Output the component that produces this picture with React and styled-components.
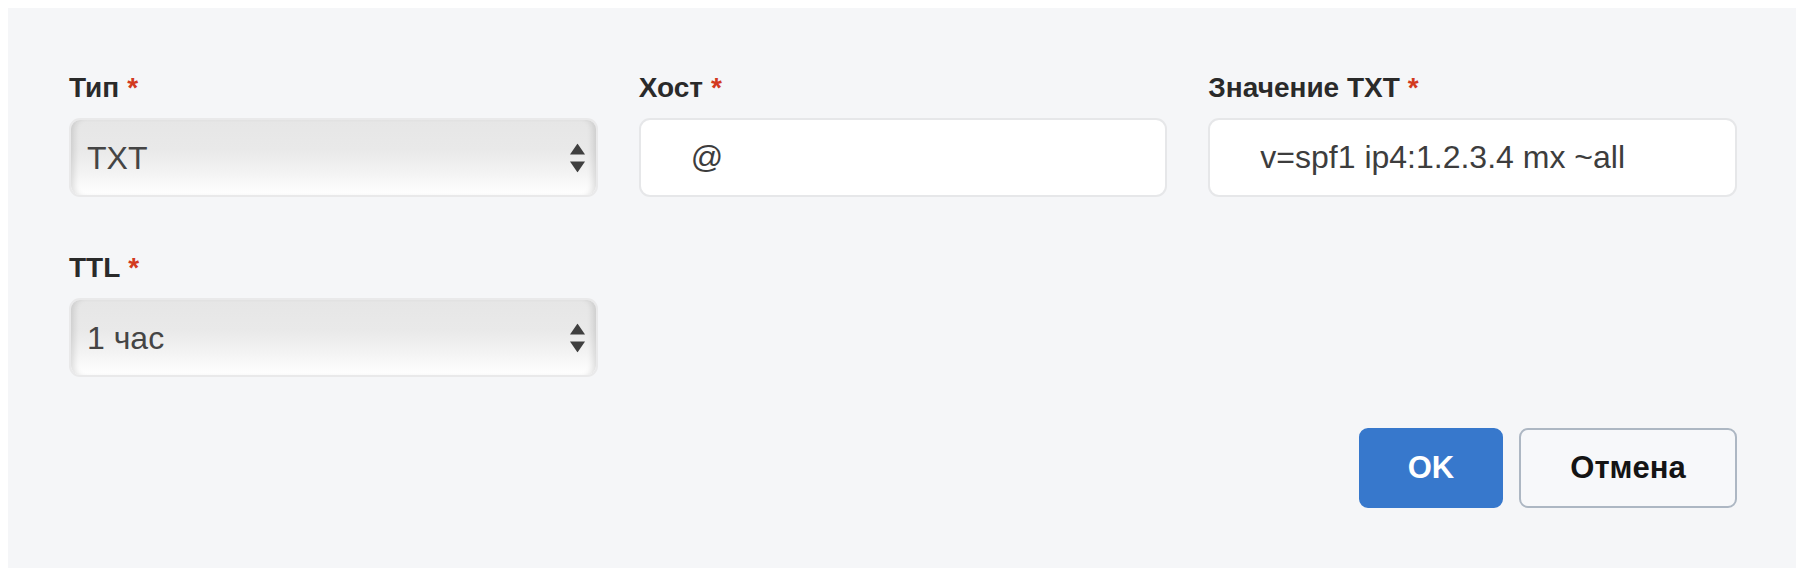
import React from "react";
import styled, { createGlobalStyle } from "styled-components";

const Global = createGlobalStyle`
  html, body { margin: 0; padding: 0; background: #ffffff; }
  body { margin: 8px; font-family: "Liberation Sans", Arial, sans-serif; }
  * { box-sizing: border-box; }
`;

const Panel = styled.form`
  background: #f5f6f8;
  padding: 64px 59px 60px 61px;
  height: 560px;
`;

const Grid = styled.div`
  display: grid;
  grid-template-columns: repeat(3, 1fr);
  column-gap: 41px;
  row-gap: 55px;
`;

const Field = styled.div`
  display: flex;
  flex-direction: column;
  min-width: 0;
`;

const Label = styled.label`
  font-size: 28px;
  line-height: 32px;
  font-weight: 700;
  color: #2a2a2a;
  margin-bottom: 14px;
  white-space: nowrap;
`;

const Required = styled.span`
  color: #d23a1f;
  margin-left: 8px;
`;

const SelectWrap = styled.div`
  position: relative;
  height: 79px;
`;

const NativeSelect = styled.select`
  appearance: none;
  -webkit-appearance: none;
  width: 100%;
  height: 100%;
  border: 2px solid #e9e9ea;
  border-radius: 11px;
  padding: 0 50px 0 16px;
  font-family: "Liberation Sans", Arial, sans-serif;
  font-size: 32px;
  color: #454545;
  background: linear-gradient(to bottom, #e6e6e6 0%, #e9e9e9 40%, #f3f3f3 70%, #ffffff 100%);
  box-shadow: inset 7px 0 6px -4px rgba(0, 0, 0, 0.12), inset -7px 0 6px -4px rgba(0, 0, 0, 0.12);
  outline: none;
`;

const Arrows = styled.svg`
  position: absolute;
  right: 13px;
  top: 50%;
  transform: translateY(-50%);
  pointer-events: none;
`;

const TextInput = styled.input`
  height: 79px;
  width: 100%;
  border: 2px solid #e6e7e9;
  border-radius: 11px;
  background: #ffffff;
  padding: 0 16px 0 50px;
  font-family: "Liberation Sans", Arial, sans-serif;
  font-size: 32px;
  color: #3d3d3d;
  outline: none;
`;

const Actions = styled.div`
  display: flex;
  justify-content: flex-end;
  gap: 16px;
  margin-top: 51px;
`;

const Button = styled.button`
  height: 80px;
  width: ${(p) => (p.$primary ? "144px" : "218px")};
  border-radius: 9px;
  font-family: "Liberation Sans", Arial, sans-serif;
  font-size: 31px;
  font-weight: 700;
  cursor: pointer;
  border: 2px solid ${(p) => (p.$primary ? "#3778cc" : "#adb7c3")};
  background: ${(p) => (p.$primary ? "#3778cc" : "#f7f8fa")};
  color: ${(p) => (p.$primary ? "#ffffff" : "#141414")};
`;

function SelectField({ label, value, options }) {
  return (
    <Field>
      <Label>
        {label}
        <Required>*</Required>
      </Label>
      <SelectWrap>
        <NativeSelect defaultValue={value}>
          {options.map((o) => (
            <option key={o}>{o}</option>
          ))}
        </NativeSelect>
        <Arrows width="15" height="29" viewBox="0 0 15 29">
          <polygon points="7.5,0 15,11 0,11" fill="#3f3f3f" />
          <polygon points="0,18 15,18 7.5,29" fill="#3f3f3f" />
        </Arrows>
      </SelectWrap>
    </Field>
  );
}

function InputField({ label, value }) {
  return (
    <Field>
      <Label>
        {label}
        <Required>*</Required>
      </Label>
      <TextInput defaultValue={value} />
    </Field>
  );
}

export default function App() {
  return (
    <>
      <Global />
      <Panel onSubmit={(e) => e.preventDefault()}>
        <Grid>
          <SelectField label="Тип" value="TXT" options={["A", "AAAA", "CNAME", "MX", "TXT"]} />
          <InputField label="Хост" value="@" />
          <InputField label="Значение TXT" value="v=spf1 ip4:1.2.3.4 mx ~all" />
          <SelectField label="TTL" value="1 час" options={["5 минут", "1 час", "1 день"]} />
        </Grid>
        <Actions>
          <Button type="submit" $primary>OK</Button>
          <Button type="button">Отмена</Button>
        </Actions>
      </Panel>
    </>
  );
}
